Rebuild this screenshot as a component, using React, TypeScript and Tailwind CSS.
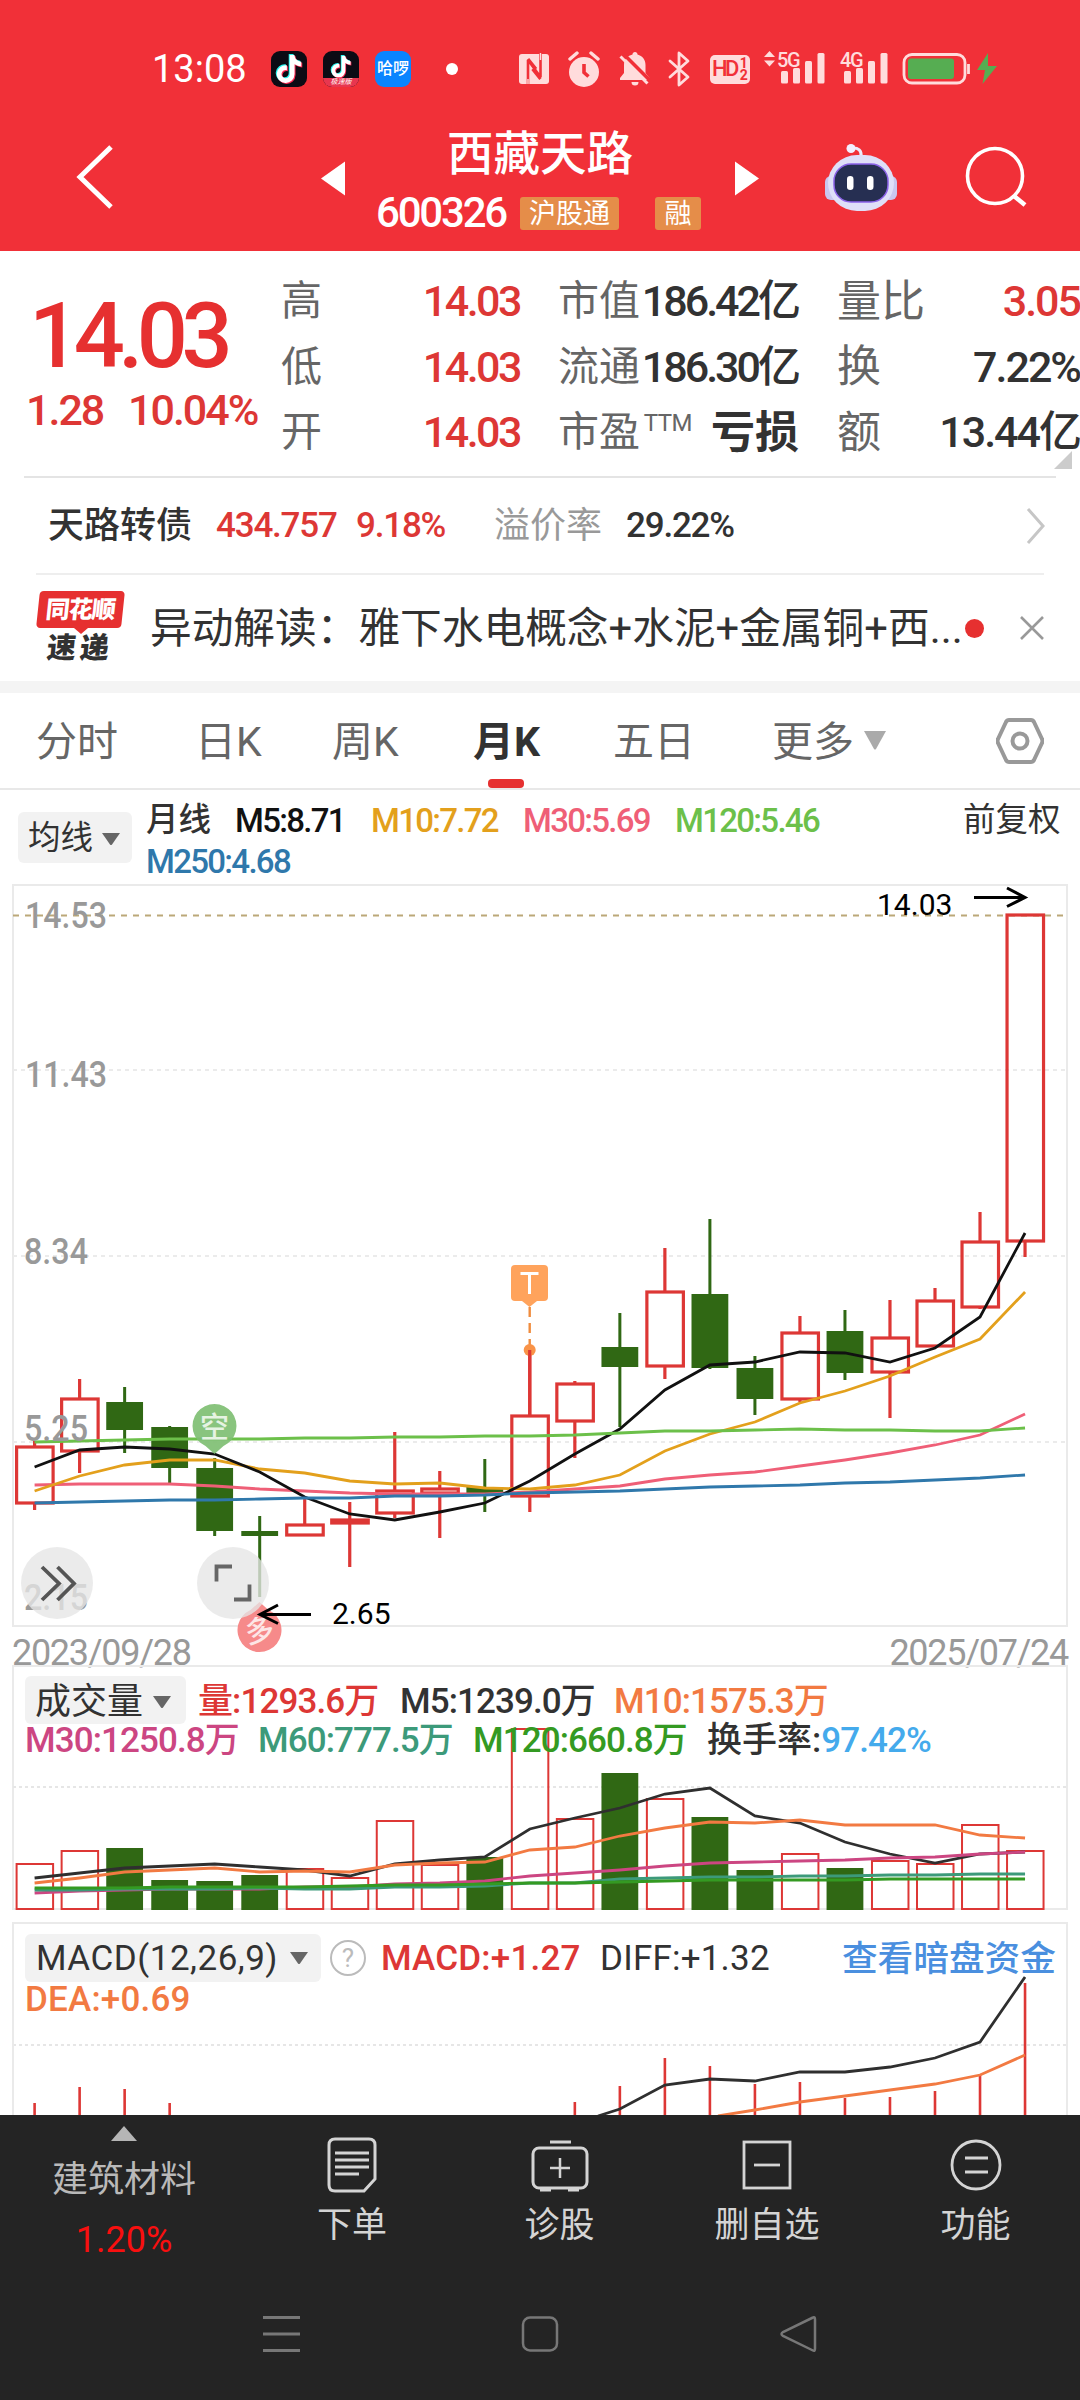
import { FaTiktok } from "react-icons/fa6";

interface CandleProps {
  high: number;
  top: number;
  bottom: number;
  low: number;
  up: boolean;
}

// pixel rows inside the K line panel: high, body top, body bottom, low, rising
const candleRows: [number, number, number, number, boolean][] = [
  [1441, 1447, 1503, 1510, true],
  [1379, 1399, 1451, 1473, true],
  [1387, 1402, 1430, 1453, false],
  [1426, 1427, 1468, 1483, false],
  [1458, 1468, 1531, 1536, false],
  [1516, 1531, 1536, 1597, false],
  [1499, 1525, 1535, 1535, true],
  [1502, 1520, 1523, 1567, true],
  [1432, 1491, 1513, 1518, true],
  [1471, 1489, 1493, 1538, true],
  [1459, 1487, 1493, 1512, false],
  [1350, 1416, 1496, 1512, true],
  [1381, 1384, 1421, 1458, true],
  [1313, 1347, 1367, 1427, false],
  [1248, 1292, 1366, 1379, true],
  [1219, 1294, 1368, 1369, false],
  [1356, 1368, 1399, 1415, false],
  [1316, 1333, 1399, 1402, true],
  [1310, 1331, 1373, 1380, false],
  [1300, 1338, 1372, 1418, true],
  [1288, 1301, 1346, 1346, true],
  [1212, 1242, 1307, 1309, true],
  [915, 915, 1241, 1257, true],
];

const candles: CandleProps[] = candleRows.map(([high, top, bottom, low, up]) => ({
  high,
  top,
  bottom,
  low,
  up,
}));

const priceLines = [
  { color: "#ef5f77", y: [1485, 1484, 1484, 1484, 1486, 1489, 1491, 1493, 1494, 1494, 1494, 1492, 1489, 1486, 1479, 1475, 1472, 1466, 1460, 1453, 1445, 1435, 1414] },
  { color: "#e3a01c", y: [1491, 1476, 1465, 1460, 1460, 1469, 1473, 1481, 1484, 1483, 1488, 1489, 1485, 1475, 1451, 1434, 1422, 1403, 1391, 1376, 1357, 1339, 1292] },
  { color: "#111111", y: [1467, 1450, 1447, 1449, 1454, 1472, 1497, 1514, 1520, 1512, 1503, 1481, 1454, 1429, 1390, 1365, 1362, 1352, 1353, 1362, 1348, 1317, 1233] },
  { color: "#6cc04a", y: [1442, 1441, 1440, 1439, 1439, 1439, 1438, 1438, 1437, 1437, 1436, 1436, 1435, 1433, 1431, 1431, 1430, 1429, 1430, 1430, 1431, 1431, 1428] },
  { color: "#2f78ab", y: [1503, 1502, 1501, 1500, 1500, 1499, 1498, 1498, 1496, 1496, 1495, 1493, 1492, 1491, 1489, 1487, 1486, 1485, 1483, 1482, 1480, 1478, 1475] },
];

const volumeTops = [1864, 1851, 1848, 1880, 1881, 1875, 1869, 1878, 1821, 1865, 1857, 1729, 1819, 1773, 1799, 1817, 1870, 1854, 1868, 1861, 1864, 1825, 1851];

const volumeLines = [
  { color: "#2f2f2f", y: [1878, 1873, 1868, 1866, 1864, 1867, 1870, 1876, 1864, 1860, 1857, 1829, 1818, 1808, 1794, 1788, 1816, 1823, 1842, 1854, 1863, 1854, 1852] },
  { color: "#f27a42", y: [1883, 1878, 1872, 1870, 1868, 1872, 1871, 1872, 1865, 1863, 1862, 1850, 1847, 1836, 1828, 1822, 1823, 1820, 1825, 1825, 1825, 1835, 1838] },
  { color: "#cc4682", y: [1893, 1891, 1890, 1889, 1889, 1889, 1887, 1887, 1884, 1883, 1881, 1876, 1873, 1870, 1866, 1863, 1862, 1861, 1860, 1858, 1857, 1854, 1852] },
  { color: "#3c9a7a", y: [1890, 1890, 1889, 1889, 1889, 1888, 1889, 1889, 1887, 1887, 1886, 1883, 1883, 1879, 1878, 1877, 1877, 1876, 1876, 1875, 1875, 1874, 1874] },
  { color: "#349a22", y: [1888, 1888, 1888, 1887, 1887, 1887, 1887, 1886, 1885, 1885, 1884, 1883, 1883, 1882, 1881, 1880, 1880, 1880, 1880, 1879, 1879, 1879, 1879] },
];

const macdSticks: [number, number][] = [
  [0, 2103], [1, 2087], [2, 2089], [3, 2103], [12, 2102], [13, 2086], [14, 2058], [15, 2066],
  [16, 2084], [17, 2082], [18, 2098], [19, 2097], [20, 2091], [21, 2075], [22, 1983],
];

const RED = "#dd3735";
const GREEN = "#306814";

const xAt = (i: number) => 34.6 + i * 45.02;
const toPoints = (ys: number[]) => ys.map((y, i) => `${xAt(i)},${y}`).join(" ");

const quotes = [
  { a: "高", av: "14.03", b: "市值", bv: "186.42亿", c: "量比", cv: "3.05", red: true },
  { a: "低", av: "14.03", b: "流通", bv: "186.30亿", c: "换", cv: "7.22%", red: false },
  { a: "开", av: "14.03", b: "市盈", bv: "亏损", c: "额", cv: "13.44亿", red: false },
];

const Caret = ({ className = "" }: { className?: string }) => (
  <svg viewBox="0 0 18 12" className={`h-[12px] w-[18px] shrink-0 ${className}`}>
    <path d="M0 0h18l-8 11.5q-1 1-2 0z" fill="#666" />
  </svg>
);

const Douyin = () => (
  <span className="relative block h-[28px] w-[26px]">
    <FaTiktok className="absolute -left-px -top-px h-full w-full text-[#25f4ee]" />
    <FaTiktok className="absolute left-px top-px h-full w-full text-[#fe2c55]" />
    <FaTiktok className="absolute left-0 top-0 h-full w-full text-white" />
  </span>
);

const Signal = ({ label, arrows }: { label: string; arrows?: boolean }) => (
  <div className="relative h-[36px] w-[62px]">
    <svg viewBox="0 0 62 36" className="h-[36px] w-[62px]">
      <g fill="#ffdcdc">
        {arrows && <path d="M0 6l5.500-6 5.500 6zM0 9.500h11l-5.500 6z" />}
        <rect x="17" y="20" width="7" height="12.500" rx="1.500" />
        <rect x="29" y="17" width="7" height="15.500" rx="1.500" />
        <rect x="41" y="10" width="7" height="22.500" rx="1.500" />
        <rect x="53.500" y="2" width="7" height="30.500" rx="1.500" />
      </g>
    </svg>
    <span className="absolute left-[13px] -top-[3px] text-[20px] font-medium leading-[24px] tracking-[-1.400px] text-[#ffdcdc]">
      {label}
    </span>
  </div>
);

const StatusBar = () => (
  <div className="flex h-[104px] items-center pl-[152px] pt-[34px] text-white">
    <span className="w-[119px] text-[38px] leading-none">13:08</span>
    <div className="flex h-[36px] w-[36px] items-center justify-center rounded-[9px] bg-[#0c0b14]">
      <Douyin />
    </div>
    <div className="relative ml-4 flex h-[36px] w-[36px] justify-center overflow-hidden rounded-[9px] bg-[#0c0b14]">
      <div className="scale-[0.78] pt-px">
        <Douyin />
      </div>
      <div className="absolute bottom-0 left-0 flex h-[9px] w-full items-center justify-center bg-[#e8364f] text-[7px] italic leading-none">
        极速版
      </div>
    </div>
    <div className="ml-4 flex h-[36px] w-[36px] items-center justify-center rounded-[9px] bg-[#0a84ff] text-[16px] font-medium leading-none">
      哈啰
    </div>
    <div className="ml-[35px] h-3 w-3 rounded-full bg-white" />
    {/* NFC */}
    <svg viewBox="0 0 30 32" className="ml-[61px] h-[32px] w-[30px]">
      <rect x="0" y="1" width="30" height="30" rx="3" fill="#ffdcdc" />
      <path d="M9 31V7l12.500 17V1" stroke="#f13038" strokeWidth="2.600" fill="none" strokeLinejoin="bevel" />
      <path d="M9 6l8 10M21.500 26l-8-10" stroke="#f13038" strokeWidth="3" />
      <path d="M9 26v5M21.500 0v7" stroke="#ffdcdc" strokeWidth="1.400" />
    </svg>
    <svg viewBox="0 0 34 36" className="ml-[18px] h-[36px] w-[34px]">
      <circle cx="17" cy="21" r="15" fill="#ffdcdc" />
      <path d="M3 8l7-6M31 8l-7-6" stroke="#ffdcdc" strokeWidth="3.400" strokeLinecap="round" />
      <path d="M17 13v8.500l4.500 4" stroke="#f13038" strokeWidth="3.600" fill="none" />
    </svg>
    <svg viewBox="0 0 32 36" className="ml-[18px] h-[36px] w-[32px]">
      <path d="M16 1c1.500 0 2.500 1 2.500 2.500c5 1.500 8 5 8 10.500v8l4 5v2H1v-2l4-5v-8c0-5.500 3-9 8.500-10.500c0-1.500 1-2.500 2.500-2.500zM12.500 31h7a3.500 3.500 0 0 1-7 0z" fill="#ffdcdc" />
      <path d="M4 2.500l29 29" stroke="#f13038" strokeWidth="3.600" />
      <path d="M1.500 5.500l27 27" stroke="#ffdcdc" strokeWidth="3" />
    </svg>
    <svg viewBox="0 0 22 36" className="ml-[17px] h-[36px] w-[22px]">
      <path d="M2 10l18 16-9 8V2l9 8L2 26" stroke="#ffdcdc" strokeWidth="2.800" fill="none" strokeLinejoin="round" strokeLinecap="round" />
    </svg>
    <div className="ml-5 flex h-[29px] w-[40px] items-center justify-center rounded-[5px] bg-[#ffdcdc] text-[#f13038]">
      <span className="text-[22px] font-medium leading-none tracking-[-2.600px]">HD</span>
      <span className="ml-[3px] flex flex-col text-[14px] font-bold leading-[12px]">
        <span>1</span>
        <span>2</span>
      </span>
    </div>
    <div className="ml-[14px]">
      <Signal label="5G" arrows />
    </div>
    <div className="ml-px">
      <Signal label="4G" />
    </div>
    <svg viewBox="0 0 96 36" className="ml-[13px] h-[36px] w-[96px]">
      <rect x="2" y="3.500" width="61" height="28.500" rx="8" fill="none" stroke="#ffdcdc" strokeWidth="2.800" />
      <rect x="6" y="7.500" width="46" height="20.500" rx="3" fill="#56ad52" />
      <path d="M66.500 13v10" stroke="#ffdcdc" strokeWidth="2.800" />
      <path d="M86 2L75 19h8l-2.500 14L95 15h-9z" fill="#56ad52" />
    </svg>
  </div>
);

const Header = () => (
  <div className="flex h-[147px] items-center pb-[2px] pl-[75px] text-white">
    <svg viewBox="0 0 38 64" className="h-[64px] w-[38px]">
      <path d="M36 2L5 32l31 30" fill="none" stroke="#fff" strokeWidth="5" />
    </svg>
    <svg viewBox="0 0 24 34" className="ml-[208px] mt-1 h-[35px] w-[24px]">
      <path d="M24 0v34L0 17z" fill="#fff" />
    </svg>
    <div className="flex w-[390px] flex-col pt-[9px]">
      <h1 className="text-center text-[46.500px] font-medium leading-[56px]">西藏天路</h1>
      <div className="flex items-center pl-[31px] pt-2">
        <span className="w-[144px] text-[42px] font-medium leading-[46px] tracking-[-2.200px]">600326</span>
        <span className="h-[33px] w-[99px] rounded-[3px] bg-[#e58d49] text-center text-[27px] leading-[35px]">
          沪股通
        </span>
        <span className="ml-9 h-[33px] w-[46px] rounded-[3px] bg-[#e58d49] text-center text-[27px] leading-[35px]">
          融
        </span>
      </div>
    </div>
    <svg viewBox="0 0 24 34" className="mt-1 h-[35px] w-[24px]">
      <path d="M0 0v34l24-17z" fill="#fff" />
    </svg>
    <svg viewBox="0 0 72 68" className="ml-[66px] h-[68px] w-[72px]">
      <path d="M36 14c1-7-3-9-8-9" stroke="#eceafb" strokeWidth="3" fill="none" />
      <circle cx="26" cy="5.500" r="4.500" fill="#f3efff" />
      <rect x="0" y="33" width="14" height="24" rx="6" fill="#c9c7ef" />
      <rect x="58" y="33" width="14" height="24" rx="6" fill="#c9c7ef" />
      <rect x="3" y="12" width="66" height="56" rx="29" fill="#dfdff8" />
      <rect x="9" y="21" width="54" height="38" rx="17" fill="#262f52" stroke="#8b62e8" strokeWidth="1.500" />
      <rect x="22" y="33" width="6.500" height="14" rx="3.200" fill="#fff" />
      <rect x="42" y="33" width="6.500" height="14" rx="3.200" fill="#fff" />
    </svg>
    <svg viewBox="0 0 62 62" className="ml-[68px] h-[62px] w-[62px]">
      <circle cx="30" cy="30" r="27.500" fill="none" stroke="#fff" strokeWidth="3.600" />
      <path d="M49 50l11 9" stroke="#fff" strokeWidth="4.500" />
    </svg>
  </div>
);

const QuoteBoard = () => (
  <div className="relative flex h-[225px]">
    <div className="w-[281px] pl-[26px] text-[#e63030]">
      <div className="pl-[3px] pt-[41px] text-[90px] font-medium leading-[90px] tracking-[-6.500px]">14.03</div>
      <div className="mt-[6px] flex text-[43px] font-medium leading-[44px] tracking-[-2px] text-[#dd3735]">
        <span className="w-[102px]">1.28</span>
        <span>10.04%</span>
      </div>
    </div>
    <div className="flex flex-1 flex-col pt-[18px]">
      {quotes.map((q) => (
        <div key={q.a} className="flex h-[65.500px] items-center whitespace-nowrap text-[43px] leading-none tracking-[-2px] text-[#323232]">
          <span className="w-[99px] text-[41px] tracking-normal text-[#666]">{q.a}</span>
          <span className="w-[140px] text-right font-medium tracking-[-2.500px] text-[#dd3735]">{q.av}</span>
          <span className="w-[119px] pl-[38px] text-[41px] tracking-normal text-[#666]">{q.b}</span>
          {q.b === "市盈" ? (
            <span className="flex w-[160px] justify-end">
              <span className="mr-[19px] text-[24px] tracking-[-0.500px] text-[#666]">TTM</span>
              <span className="text-[44px] font-bold tracking-normal">{q.bv}</span>
            </span>
          ) : (
            <span className="w-[160px] pr-[1px] text-right font-medium tracking-[-3px]">{q.bv}</span>
          )}
          <span className="w-[130px] pl-[38px] text-[44px] tracking-normal text-[#666]">{q.c}</span>
          <span className={`flex-1 text-right font-medium ${q.red ? "text-[#dd3735]" : ""}`}>{q.cv}</span>
        </div>
      ))}
    </div>
    <svg viewBox="0 0 18 18" className="absolute bottom-[7px] right-2 h-[18px] w-[18px]">
      <path d="M18 0v18H0z" fill="#ccc" />
    </svg>
  </div>
);

const BondRow = () => (
  <div className="mx-6 flex h-[97px] items-center border-t-2 border-[#e4e4e4] pl-[24px] pr-[10px] text-[35px] leading-none tracking-[-1.200px] text-[#323232]">
    <span className="w-[168px] text-[36px] font-medium tracking-normal">天路转债</span>
    <span className="w-[140px] font-medium text-[#dd3735]">434.757</span>
    <span className="w-[138px] font-medium text-[#dd3735]">9.18%</span>
    <span className="w-[132px] text-[36px] tracking-normal text-[#999]">溢价率</span>
    <span className="font-medium">29.22%</span>
    <svg viewBox="0 0 20 36" className="ml-auto h-[36px] w-[20px]">
      <path d="M2 1l15 17L2 35" fill="none" stroke="#c6c6c6" strokeWidth="3" />
    </svg>
  </div>
);

const NewsRow = () => (
  <div className="mx-9 flex h-[108px] items-center border-t-2 border-[#eee]">
    <div className="flex h-[74px] w-[89px] flex-col items-center">
      <div className="flex h-[37px] w-[85px] -skew-x-6 items-center justify-center rounded-[4px] bg-[#e63030] text-[24px] font-black leading-none tracking-[-1px] text-white">
        同花顺
      </div>
      <svg viewBox="0 0 14 6" className="h-[6px] w-[14px]">
        <path d="M0 0h14L7 6z" fill="#e63030" />
      </svg>
      <div className="-skew-x-6 text-[29px] font-black leading-[28px] tracking-[4px] text-[#323232]">速递</div>
    </div>
    <span className="ml-[25px] w-[815px] whitespace-nowrap pt-[2px] text-[41.700px] leading-none text-[#323232]">
      异动解读：雅下水电概念+水泥+金属铜+西...
    </span>
    <span className="h-[19px] w-[19px] rounded-full bg-[#e63030]" />
    <svg viewBox="0 0 24 24" className="ml-auto h-[24px] w-[24px]">
      <path d="M1 1l22 22M23 1L1 23" stroke="#999" strokeWidth="2.600" />
    </svg>
  </div>
);

const Tabs = () => (
  <div className="flex h-[97px] items-center whitespace-nowrap border-b-2 border-[#e8e8e8] pl-[36px] text-[41px] leading-none text-[#666]">
    <span className="w-[159px] pt-1">分时</span>
    <span className="w-[137px] pt-1">日K</span>
    <span className="w-[141px] pt-1">周K</span>
    <span className="relative flex h-full w-[140px] items-center pt-1 font-bold text-[#323232]">
      月K
      <span className="absolute bottom-0 left-[15px] h-[9px] w-[36px] rounded-[4px] bg-[#e63030]" />
    </span>
    <span className="w-[159px] pt-1">五日</span>
    <span className="pt-1">更多</span>
    <svg viewBox="0 0 22 19" className="ml-[10px] h-[19px] w-[22px]">
      <path d="M0 0h22L12 18q-1 1-2 0z" fill="#aaa" />
    </svg>
    <svg viewBox="0 0 48 46" className="ml-auto mr-9 h-[46px] w-[48px]">
      <path d="M13 2h22q2 0 3 2l8 17q1 2 0 4l-8 17q-1 2-3 2H13q-2 0-3-2L2 25q-1-2 0-4L10 4q1-2 3-2z" fill="none" stroke="#999" strokeWidth="4" />
      <circle cx="24" cy="23" r="7.500" fill="none" stroke="#999" strokeWidth="4" />
    </svg>
  </div>
);

const MaRow = () => (
  <div className="flex h-[94px] pl-[18px] text-[33px] font-medium leading-[41px] tracking-[-1.700px]">
    <div className="mt-[22px] flex h-[51px] w-[114px] items-center rounded-[6px] bg-[#f2f2f2] pl-[10px] pt-[2px] text-[32.500px] font-normal tracking-normal text-[#323232]">
      均线
      <Caret className="ml-[9px]" />
    </div>
    <div className="ml-[14px] flex w-[817px] flex-wrap content-start whitespace-nowrap pt-[10px]">
      <span className="w-[89px] text-[32.500px] tracking-normal text-[#323232]">月线</span>
      <span className="w-[136px] text-[#111]">M5:8.71</span>
      <span className="w-[152px] text-[#e3a01c]">M10:7.72</span>
      <span className="w-[152px] text-[#ef5f77]">M30:5.69</span>
      <span className="w-[160px] text-[#6cc04a]">M120:5.46</span>
      <span className="w-full text-[#2f78ab]">M250:4.68</span>
    </div>
    <span className="pt-[10px] text-[32.500px] font-normal tracking-normal text-[#323232]">前复权</span>
  </div>
);

const KLinePanel = () => (
  <div className="relative h-[781px]">
    <div className="mx-[12px] h-[743px] border-2 border-[#eaeaea]" />
    <svg viewBox="0 884 1080 781" className="absolute left-0 top-0 h-[781px] w-[1080px] overflow-visible">
      <path d="M13 915.500H1066" stroke="#bba878" strokeWidth="2" strokeDasharray="6 6" />
      <path d="M13 1070H1066M13 1256H1066M13 1442H1066" stroke="#ebebeb" strokeWidth="2" strokeDasharray="4 4" />
      {candles.map((c, i) =>
        c.up ? (
          <g key={i} stroke={RED} strokeWidth="3.200" fill="none">
            <path d={`M${xAt(i)} ${c.high}V${c.top}M${xAt(i)} ${c.bottom}V${c.low}`} />
            <rect x={xAt(i) - 18} y={c.top} width="36.500" height={c.bottom - c.top} />
          </g>
        ) : (
          <g key={i} fill={GREEN}>
            <rect x={xAt(i) - 1.500} y={c.high} width="3" height={c.low - c.high} />
            <rect x={xAt(i) - 18.400} y={c.top} width="36.800" height={c.bottom - c.top} />
          </g>
        )
      )}
      {priceLines.map((line) => (
        <polyline key={line.color} points={toPoints(line.y)} fill="none" stroke={line.color} strokeWidth="2.800" />
      ))}

      {/* price scale */}
      <g fill="#999" fontSize="36" fontWeight="500">
        <text x="25" y="928" textLength="82" lengthAdjust="spacingAndGlyphs">14.53</text>
        <text x="25" y="1087" textLength="82" lengthAdjust="spacingAndGlyphs">11.43</text>
        <text x="24" y="1264" textLength="64" lengthAdjust="spacingAndGlyphs">8.34</text>
        <text x="24" y="1441" textLength="64" lengthAdjust="spacingAndGlyphs">5.25</text>
        <text x="24" y="1610" textLength="64" lengthAdjust="spacingAndGlyphs">2.15</text>
      </g>

      {/* trade mark */}
      <rect x="511" y="1265" width="37" height="36" rx="4" fill="#ffa35c" />
      <path d="M522 1301h15l-7.500 6z" fill="#ffa35c" />
      <path d="M520.500 1273.500h18M529.500 1273v21" stroke="#fff" strokeWidth="3" />
      <path d="M529.700 1307V1346" stroke="#f08c3e" strokeWidth="2.400" strokeDasharray="10 6" />
      <circle cx="529.700" cy="1350" r="6" fill="#f99348" />
      <path d="M529.700 1350V1416" stroke={RED} strokeWidth="3.200" />

      {/* short / long pins */}
      <path d="M214.500 1454l-9-8a22 22 0 1 1 18 0z" fill="#7fbf73" fillOpacity="0.920" />
      <text x="214.500" y="1438" fontSize="29" fontWeight="500" fill="#e6f3e3" textAnchor="middle">空</text>
      <path d="M259.500 1602l9 8a22 22 0 1 1-18 0z" fill="#f68a8a" />
      <text x="259.500" y="1641" fontSize="29" fontWeight="500" fill="#fde6e6" textAnchor="middle" transform="rotate(-12 259.500 1630)">多</text>

      <circle cx="57" cy="1583" r="36" fill="#e6e6e6" fillOpacity="0.780" />
      <path d="M42 1567l17 16.500-17 16.500M57.500 1567l16.500 16.500-16.500 16.500" fill="none" stroke="#555" strokeWidth="3.800" />
      <circle cx="233" cy="1583" r="36" fill="#e6e6e6" fillOpacity="0.780" />
      <path d="M232 1566.500h-15.500v15M234 1599.500h15.500v-15" fill="none" stroke="#666" strokeWidth="3.800" />

      <g stroke="#000" strokeWidth="3" fill="none">
        <path d="M311 1614.500H260M278 1605l-18 9.500 18 9" />
        <path d="M974 897.500h50M1007 888l18 9.500-18 9" />
      </g>
      <g fontSize="30" fill="#000">
        <text x="332" y="1624">2.65</text>
        <text x="877" y="914.500">14.03</text>
      </g>
    </svg>
    <div className="flex justify-between px-[12px] pt-[7px] text-[36px] leading-[38px] tracking-[-1.300px] text-[#999]">
      <span>2023/09/28</span>
      <span>2025/07/24</span>
    </div>
  </div>
);

const VolumePanel = () => (
  <div className="relative mx-[12px] h-[245px] border-2 border-[#eaeaea]">
    <svg viewBox="14 1667 1052 241" className="absolute left-0 top-0 h-[241px] w-[1052px] overflow-visible">
      <path d="M13 1787H1066" stroke="#e6e6e6" strokeWidth="2" strokeDasharray="3 3" />
      {volumeTops.map((top, i) =>
        candles[i].up ? (
          <rect key={i} x={xAt(i) - 18} y={top} width="36.500" height={1909 - top} fill="none" stroke={RED} strokeWidth="2" />
        ) : (
          <rect key={i} x={xAt(i) - 18.400} y={top} width="36.800" height={1910 - top} fill={GREEN} />
        )
      )}
      {volumeLines.map((line) => (
        <polyline key={line.color} points={toPoints(line.y)} fill="none" stroke={line.color} strokeWidth="2.800" />
      ))}
    </svg>
    <div className="relative pl-[11px] pt-[9px] text-[35px] font-medium leading-[40px] tracking-[-0.900px]">
      <div className="flex h-[48px] items-center whitespace-nowrap">
        <div className="mr-[12px] flex h-[48px] w-[161px] items-center rounded-[6px] bg-[#f2f2f2] pl-[10px] pt-[3px] text-[36px] font-normal tracking-normal text-[#323232]">
          成交量
          <Caret className="ml-[10px]" />
        </div>
        <span className="w-[202px] pt-[3px] text-[#dd3735]">量:1293.6万</span>
        <span className="w-[214px] pt-[3px] text-[#323232]">M5:1239.0万</span>
        <span className="pt-[3px] text-[#f27a42]">M10:1575.3万</span>
      </div>
      <div className="-mt-[3px] flex whitespace-nowrap">
        <span className="w-[233px] text-[#cc4682]">M30:1250.8万</span>
        <span className="w-[215px] text-[#3c9a7a]">M60:777.5万</span>
        <span className="w-[234px] text-[#349a22]">M120:660.8万</span>
        <span className="tracking-normal text-[#323232]">换手率:</span>
        <span className="text-[#44aaec]">97.42%</span>
      </div>
    </div>
  </div>
);

const MacdPanel = () => (
  <div className="relative mx-[12px] mt-[12px] h-[193px] border-x-2 border-t-2 border-[#eaeaea]">
    <svg viewBox="14 1924 1052 191" className="absolute left-0 top-0 h-[191px] w-[1052px]">
      <path d="M13 2045H1066" stroke="#e6e6e6" strokeWidth="2" strokeDasharray="3 3" />
      {macdSticks.map(([i, top]) => (
        <path key={i} d={`M${xAt(i)} ${top}V2116`} stroke={RED} strokeWidth="2.600" />
      ))}
      <path
        d={`M598 2116L${xAt(13)} 2109L${xAt(14)} 2085L${xAt(15)} 2079L${xAt(16)} 2081L${xAt(17)} 2072L${xAt(18)} 2072L${xAt(19)} 2067L${xAt(20)} 2058L${xAt(21)} 2042L${xAt(22)} 1977`}
        fill="none"
        stroke="#2f2f2f"
        strokeWidth="2.800"
      />
      <path
        d={`M718 2116L${xAt(16)} 2110L${xAt(17)} 2102L${xAt(18)} 2096L${xAt(19)} 2090L${xAt(20)} 2084L${xAt(21)} 2075L${xAt(22)} 2055`}
        fill="none"
        stroke="#f27a42"
        strokeWidth="2.800"
      />
    </svg>
    <div className="relative pl-[11px] pr-[10px] pt-[10px] text-[35px] leading-[40px] tracking-[0.200px]">
      <div className="flex h-[48px] items-center whitespace-nowrap">
        <div className="flex h-[48px] w-[296px] items-center rounded-[6px] bg-[#f2f2f2] pl-[11px] tracking-[0.500px] text-[#323232]">
          <span className="w-[254px] pt-[2px]">MACD(12,26,9)</span>
          <Caret />
        </div>
        <span className="ml-[9px] flex h-[36px] w-[36px] items-center justify-center rounded-full border-[2.500px] border-[#bbb] text-[26px] text-[#bbb]">
          ?
        </span>
        <span className="ml-[15px] w-[219px] pt-[2px] font-medium text-[#dd3735]">MACD:+1.27</span>
        <span className="pt-[2px] text-[#323232]">DIFF:+1.32</span>
        <span className="ml-auto pt-[2px] text-[35.700px] font-medium tracking-normal text-[#4a8fdf]">查看暗盘资金</span>
      </div>
      <div className="-mt-[2px] font-medium text-[#f27a42]">DEA:+0.69</div>
    </div>
  </div>
);

const BottomBar = () => (
  <div className="flex h-[285px] flex-col bg-[#242424] text-[35px] leading-none text-[#d4d4d4]">
    <div className="flex h-[160px]">
      <div className="flex w-[248px] flex-col items-center pt-[11px] text-[#b9b9b9]">
        <svg viewBox="0 0 26 15" className="h-[15px] w-[26px]">
          <path d="M13 0l13 15H0z" fill="#b5b5b5" />
        </svg>
        <span className="mt-[21px] text-[36px]">建筑材料</span>
        <span className="mt-[24px] text-[36px] text-[#f80f0f]">1.20%</span>
      </div>
      <div className="flex w-[208px] flex-col items-center pt-[22px]">
        <svg viewBox="0 0 50 56" className="h-[56px] w-[50px]" fill="none" stroke="#d4d4d4" strokeWidth="3">
          <path d="M8 2h34q6 0 6 6v34L37 54H8q-6 0-6-6V8q0-6 6-6z" />
          <path d="M8 16h34M8 23h34M8 30h34M8 37h24" />
        </svg>
        <span className="mt-[15px]">下单</span>
      </div>
      <div className="flex w-[207px] flex-col items-center pt-[22px]">
        <svg viewBox="0 0 58 56" className="h-[56px] w-[58px]" fill="none" stroke="#d4d4d4" strokeWidth="3">
          <path d="M19 5h21" />
          <rect x="2" y="11" width="54" height="40" rx="6" />
          <path d="M29 21v20M19 31h20" strokeWidth="2.500" />
          <path d="M9 53h11M37 53h11" />
        </svg>
        <span className="mt-[15px]">诊股</span>
      </div>
      <div className="flex w-[208px] flex-col items-center pt-[22px]">
        <svg viewBox="0 0 50 56" className="h-[56px] w-[50px]" fill="none" stroke="#d4d4d4" strokeWidth="2.800">
          <rect x="2" y="5" width="46" height="46" />
          <path d="M12 28h26" />
        </svg>
        <span className="mt-[15px]">删自选</span>
      </div>
      <div className="flex w-[209px] flex-col items-center pt-[22px]">
        <svg viewBox="0 0 54 56" className="h-[56px] w-[54px]" fill="none" stroke="#d4d4d4" strokeWidth="2.800">
          <circle cx="27" cy="28" r="24" />
          <path d="M16 21h23M16 35h23" />
        </svg>
        <span className="mt-[15px]">功能</span>
      </div>
    </div>
    {/* system navigation */}
    <div className="flex pl-[263px] pt-[41px]">
      <svg viewBox="0 0 38 36" className="h-[36px] w-[38px]">
        <path d="M0 1.500h37M0 18h37M0 34.500h37" stroke="#777" strokeWidth="3" />
      </svg>
      <svg viewBox="0 0 38 36" className="ml-[220px] h-[36px] w-[38px]">
        <rect x="2" y="1.500" width="34" height="33" rx="7" fill="none" stroke="#777" strokeWidth="2.500" />
      </svg>
      <svg viewBox="0 0 38 36" className="ml-[220px] h-[36px] w-[38px]">
        <path d="M34 1.500q2-1 2 2v29q0 3-2 2L4 20q-3-2 0-4z" fill="none" stroke="#777" strokeWidth="2.500" />
      </svg>
    </div>
  </div>
);

const App = () => {
  return (
    <div className="flex h-[2400px] w-[1080px] flex-col overflow-hidden bg-white font-['Roboto','Noto_Sans_CJK_SC',sans-serif]">
      <div className="h-[251px] bg-[#f13038]">
        <StatusBar />
        <Header />
      </div>
      <QuoteBoard />
      <BondRow />
      <NewsRow />
      <div className="h-[12px] bg-[#f4f4f4]" />
      <Tabs />
      <MaRow />
      <KLinePanel />
      <VolumePanel />
      <MacdPanel />
      <BottomBar />
    </div>
  );
};

export default App;
